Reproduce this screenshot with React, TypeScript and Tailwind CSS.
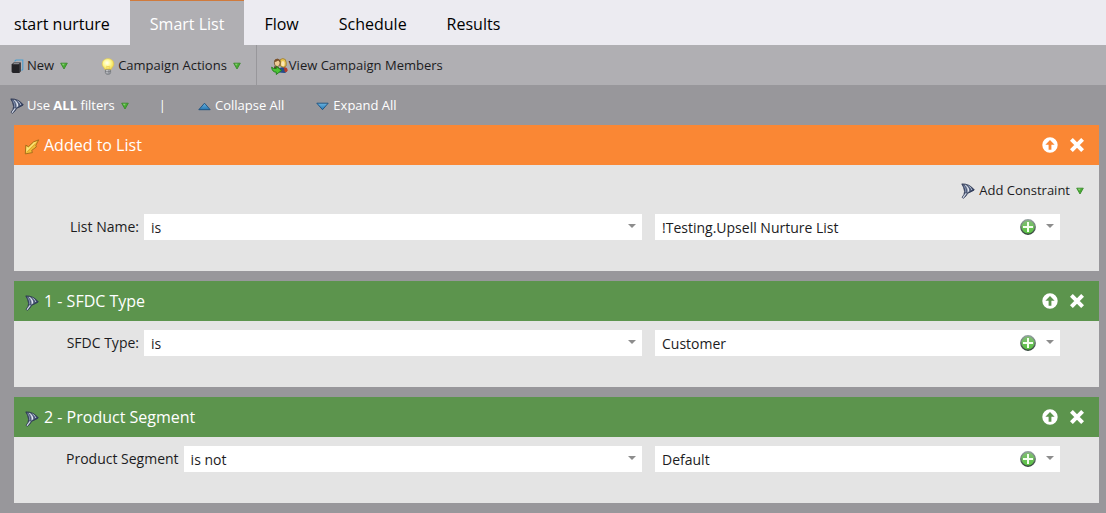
import type { ReactNode } from "react";

interface Filter {
  id: string;
  title: string;
  kind: "trigger" | "filter";
  label: string;
  operator: string;
  value: string;
}

const tabs = ["start nurture", "Smart List", "Flow", "Schedule", "Results"];

const filters: Filter[] = [
  {
    id: "added-to-list",
    title: "Added to List",
    kind: "trigger",
    label: "List Name:",
    operator: "is",
    value: "!Testing.Upsell Nurture List",
  },
  {
    id: "sfdc-type",
    title: "1 - SFDC Type",
    kind: "filter",
    label: "SFDC Type:",
    operator: "is",
    value: "Customer",
  },
  {
    id: "product-segment",
    title: "2 - Product Segment",
    kind: "filter",
    label: "Product Segment",
    operator: "is not",
    value: "Default",
  },
];

function GreenArrow() {
  return (
    <svg width="8" height="8" viewBox="0 0 8 8" aria-hidden="true">
      <path d="M0.7 1.2h6.6L4 7z" fill="#48ad33" stroke="#3a8a2c" strokeWidth="0.9" strokeLinejoin="round" />
      <path d="M1.8 1.8h3L3.2 3.8z" fill="#86cf70" />
    </svg>
  );
}

function NewIcon() {
  return (
    <svg width="13" height="15" viewBox="0 0 13 15" aria-hidden="true">
      <path d="M3.600 2.400 5 1h6.800v9.200L10.600 11.600" fill="none" stroke="#4a9fd0" strokeWidth="1.100" />
      <path d="M.6 5.400 2.600 3.400h7.200v8.600l-1.400 2H1.800L.6 13z" fill="#232327" />
      <path d="M1.600 5.200 3 4.100h5.800L7.600 5.200z" fill="#8a8a90" />
      <path d="M9.800 3.400V12l-1.400 1.800V5z" fill="#45454b" />
    </svg>
  );
}

function BulbIcon() {
  return (
    <svg width="14" height="17" viewBox="0 0 14 17" aria-hidden="true">
      <defs>
        <radialGradient id="bulb" cx="42%" cy="38%" r="62%">
          <stop offset="0" stopColor="#fffff0" />
          <stop offset="0.5" stopColor="#fff991" />
          <stop offset="1" stopColor="#f0d548" />
        </radialGradient>
      </defs>
      <path
        d="M7 .6c3.400 0 5.900 2.400 5.900 5.400 0 2.600-2.300 3.500-2.900 6H4C3.400 9.500 1.100 8.600 1.100 6 1.100 3 3.600.6 7 .6z"
        fill="url(#bulb)"
        stroke="#d8bf55"
        strokeWidth="0.6"
      />
      <path d="M6 11.300 5.700 8l1.300.8L8.300 8 8 11.300" fill="none" stroke="#e3b840" strokeWidth="0.5" />
      <path d="M4.400 11.800h5.200v3L8.400 16.400H5.600l-1.200-1.600z" fill="#b9bcc2" stroke="#686b70" strokeWidth="0.6" />
      <path d="M5.200 12.200h1.600v3H5.200z" fill="#f0f1f3" />
      <path d="M4.400 13.300h5.200M4.800 15h4.400" stroke="#55585e" strokeWidth="0.7" />
    </svg>
  );
}

function MembersIcon() {
  return (
    <svg width="17" height="17" viewBox="0 0 17 17" aria-hidden="true">
      <path d="M8 14.500Q7.600 9.300 11.500 9.300t4 4q0 1.700-2 1.700z" fill="#234c8a" />
      <path d="M12.600 9.200q4-.4 4 3.100 0 2-2.700 2z" fill="#b53a2a" />
      <path d="M9.200 1.600q2.800-2 5.200 0 1.300 3 .7 6.400l-2.500 1.300L9.400 8z" fill="#eac650" stroke="#8e6b22" strokeWidth="0.7" />
      <ellipse cx="11.900" cy="5.700" rx="1.700" ry="2.600" fill="#fbe5b4" />
      <path d="M3 8.500q4.500-1 6 2.500v3H3.500z" fill="#5f4020" />
      <ellipse cx="6.200" cy="4.900" rx="2.900" ry="3.700" fill="#efcb96" stroke="#5f3f1e" strokeWidth="0.7" />
      <path d="M3.200 4.200Q3.300.9 6.300.8q3 .1 3 3.300-1.400-.4-2-1.500Q5.700 4 3.200 4.200z" fill="#7c522a" />
      <path
        d="M.6 9.200q1.600 1.700 4.700 1.400V8.200l5.200 4.200-5.200 4.100v-2.300Q1.200 14.200.6 9.200z"
        fill="#4cc435"
        stroke="#1e7a18"
        strokeWidth="0.9"
        strokeLinejoin="round"
      />
    </svg>
  );
}

function FunnelIcon() {
  return (
    <svg width="14" height="16" viewBox="0 0 14 16" aria-hidden="true">
      <path
        d="M.8.9Q8.500.6 13.300 6.900q-2.800 1.800-6.600 3.400-1.300 2.900-4.300 4.900l-1.300-.8Q3.500 11.700 3.600 8.500 3 4 .8.9z"
        fill="#4b5875"
        stroke="#2a3450"
        strokeWidth="0.8"
        strokeLinejoin="round"
      />
      <path d="M5.200 2.200Q8.800 5 8.200 8.300L6.300 9.400Q6.900 5.600 3.700 2z" fill="#e4e9f2" />
      <path d="M2.900 2.600q2.400 3.300 1.800 6.800" fill="none" stroke="#8f9cba" strokeWidth="0.8" />
      <path d="M5.200 3.400q1.700 2.900 1 5.600" fill="none" stroke="#5b6988" strokeWidth="0.5" />
      <path d="M7.600 3Q10.900 5 10.700 7" fill="none" stroke="#aeb9cf" strokeWidth="1" />
      <path d="m5 10.600-2.800 3.700" fill="none" stroke="#d4dbe8" strokeWidth="1.100" strokeLinecap="round" />
      <path d="M10.200 4.500 13 6.900 9.300 8.600" fill="none" stroke="#303c5b" strokeWidth="0.9" />
    </svg>
  );
}

function TriggerIcon() {
  return (
    <svg width="16" height="16" viewBox="0 0 16 16" aria-hidden="true">
      <path
        d="M14.700.9 9.600 2.800 4.400 7.700 1.800 6.100 1.300 14.900 8.400 13.600 7.700 11.400 12.400 7.900 11.800 6.300z"
        fill="#f0be38"
        stroke="#a06a18"
        strokeWidth="0.9"
        strokeLinejoin="round"
      />
      <path d="M12.700 2.400 9.900 3.600 4.600 8.800 2.600 7.800 2.200 12.900z" fill="#fae77d" />
      <path d="M11 5.200 3.400 12.800" fill="none" stroke="#d39a28" strokeWidth="0.7" />
    </svg>
  );
}

function BlueTriangle({ down = false }: { down?: boolean }) {
  return (
    <svg width="13" height="9" viewBox="0 0 13 9" aria-hidden="true">
      <defs>
        <linearGradient id="triangle" x1="0" y1="0" x2="0" y2="1">
          <stop offset="0" stopColor="#6bb4e0" />
          <stop offset="1" stopColor="#2778b4" />
        </linearGradient>
      </defs>
      <path
        d={down ? "M6.500 7.700.8 1.200h11.400z" : "M6.500 1.200 12.200 7.700H.8z"}
        fill="url(#triangle)"
        stroke="#1b4f7e"
        strokeWidth="0.9"
        strokeLinejoin="round"
      />
    </svg>
  );
}

function AddIcon() {
  return (
    <svg width="16" height="16" viewBox="0 0 16 16" aria-hidden="true">
      <defs>
        <linearGradient id="add-fill" x1="0" y1="0" x2="0" y2="1">
          <stop offset="0" stopColor="#84bd78" />
          <stop offset="1" stopColor="#55c33e" />
        </linearGradient>
        <linearGradient id="add-ring" x1="0" y1="0" x2="0" y2="1">
          <stop offset="0" stopColor="#93a09f" />
          <stop offset="1" stopColor="#33463a" />
        </linearGradient>
      </defs>
      <circle cx="8" cy="8" r="7.200" fill="url(#add-fill)" stroke="url(#add-ring)" strokeWidth="1.400" />
      <path d="M8 3v10M3 8h10" stroke="#f5fff0" strokeWidth="2" />
    </svg>
  );
}

function MoveUpIcon() {
  return (
    <svg width="16" height="16" viewBox="0 0 16 16" aria-hidden="true">
      <path
        fillRule="evenodd"
        fill="#fff"
        d="M8 .3a7.700 7.700 0 1 0 0 15.400A7.700 7.700 0 0 0 8 .3zM8 3l4.600 4.800H9.400V12.700H6.600V7.800H3.400z"
      />
    </svg>
  );
}

function CloseIcon() {
  return (
    <svg width="14" height="14" viewBox="0 0 14 14" aria-hidden="true">
      <path d="m1.400 1.400 11.200 11.200M12.600 1.400 1.400 12.600" stroke="#fff" strokeWidth="4" />
    </svg>
  );
}

function SelectArrow() {
  return (
    <svg width="8" height="4" viewBox="0 0 8 4" aria-hidden="true">
      <path d="M0 0h8L4 4z" fill="#8d8d8d" />
    </svg>
  );
}

function ToolButton({ children, className = "" }: { children: ReactNode; className?: string }) {
  return (
    <button type="button" className={`flex items-center whitespace-nowrap ${className}`}>
      {children}
    </button>
  );
}

function FilterPanel({ filter }: { filter: Filter }) {
  const isTrigger = filter.kind === "trigger";

  return (
    <section className="bg-[#e4e4e4]">
      <header
        className={`flex h-10 items-center justify-between pr-[15px] pl-[10px] text-white ${
          isTrigger ? "bg-[#fa8734]" : "bg-[#5c944d]"
        }`}
      >
        <div className="flex items-center gap-1">
          <span className="flex w-4 justify-center pt-1">{isTrigger ? <TriggerIcon /> : <FunnelIcon />}</span>
          <h2 className="text-base">{filter.title}</h2>
        </div>
        <div className="flex items-center gap-3">
          <button type="button" aria-label="Move up">
            <MoveUpIcon />
          </button>
          <button type="button" aria-label="Remove">
            <CloseIcon />
          </button>
        </div>
      </header>

      {isTrigger && (
        <div className="flex h-10 items-end justify-end pr-[15px] pb-1">
          <ToolButton className="h-5 text-[13px]">
            <FunnelIcon />
            <span className="mr-1.5 ml-1">Add Constraint</span>
            <GreenArrow />
          </ToolButton>
        </div>
      )}

      <div className="flex gap-[13px] pt-[9px] pr-[39px] pb-[31px] text-sm">
        <div className="flex flex-[628] items-center">
          <label
            htmlFor={`${filter.id}-operator`}
            className="mr-[5px] min-w-[125px] pl-[52px] text-right whitespace-nowrap"
          >
            {filter.label}
          </label>
          <div className="relative min-w-0 flex-1">
            <select
              id={`${filter.id}-operator`}
              className="block h-[26px] w-full appearance-none bg-white pt-0.5 pr-6 pl-[7px]"
            >
              <option>{filter.operator}</option>
            </select>
            <span className="pointer-events-none absolute top-[10px] right-[6px]">
              <SelectArrow />
            </span>
          </div>
        </div>
        <div className="relative min-w-0 flex-[405]">
          <select
            aria-label={`${filter.title} value`}
            className="block h-[26px] w-full appearance-none bg-white pt-0.5 pr-12 pl-[7px]"
          >
            <option>{filter.value}</option>
          </select>
          <button type="button" aria-label="Add value" className="absolute top-[5px] right-6">
            <AddIcon />
          </button>
          <span className="pointer-events-none absolute top-[10px] right-[6px]">
            <SelectArrow />
          </span>
        </div>
      </div>
    </section>
  );
}

export default function App() {
  return (
    <div className="min-h-screen bg-[#98979b] font-['Open_Sans','Noto_Sans',sans-serif] text-[#1c1c1e]">
      <nav className="flex h-[45px] bg-[#ecebf1] text-base text-black">
        {tabs.map((tab, i) => (
          <a
            key={tab}
            href="#"
            className={`flex items-center border-t pt-0.5 pr-5 whitespace-nowrap ${i === 0 ? "pl-3.5" : "pl-5"} ${
              tab === "Smart List" ? "border-[#d07a3c] bg-[#b0afb3] text-white" : "border-transparent"
            }`}
          >
            {tab}
          </a>
        ))}
      </nav>

      <div className="flex h-10 items-stretch bg-[#b0afb3] text-[13px]">
        <div className="flex gap-[33px] border-r border-[#98979b] pt-0.5 pr-[15px] pl-[11px]">
          <ToolButton>
            <NewIcon />
            <span className="mr-1.5 ml-[3px]">New</span>
            <GreenArrow />
          </ToolButton>
          <ToolButton>
            <BulbIcon />
            <span className="mr-1.5 ml-[3px]">Campaign Actions</span>
            <GreenArrow />
          </ToolButton>
        </div>
        <ToolButton className="pt-0.5 pl-3.5">
          <MembersIcon />
          <span className="ml-px">View Campaign Members</span>
        </ToolButton>
      </div>

      <div className="flex h-10 items-center pt-0.5 pl-[10px] text-[13px] text-white">
        <ToolButton>
          <FunnelIcon />
          <span className="mr-1.5 ml-[3px]">
            Use <b>ALL</b> filters
          </span>
          <GreenArrow />
        </ToolButton>
        <span className="mr-8 ml-[30px]">|</span>
        <ToolButton>
          <BlueTriangle />
          <span className="ml-1">Collapse All</span>
        </ToolButton>
        <ToolButton className="ml-8">
          <BlueTriangle down />
          <span className="ml-1">Expand All</span>
        </ToolButton>
      </div>

      <main className="flex flex-col gap-[10px] pr-[7px] pb-[10px] pl-3.5">
        {filters.map((filter) => (
          <FilterPanel key={filter.id} filter={filter} />
        ))}
      </main>
    </div>
  );
}
